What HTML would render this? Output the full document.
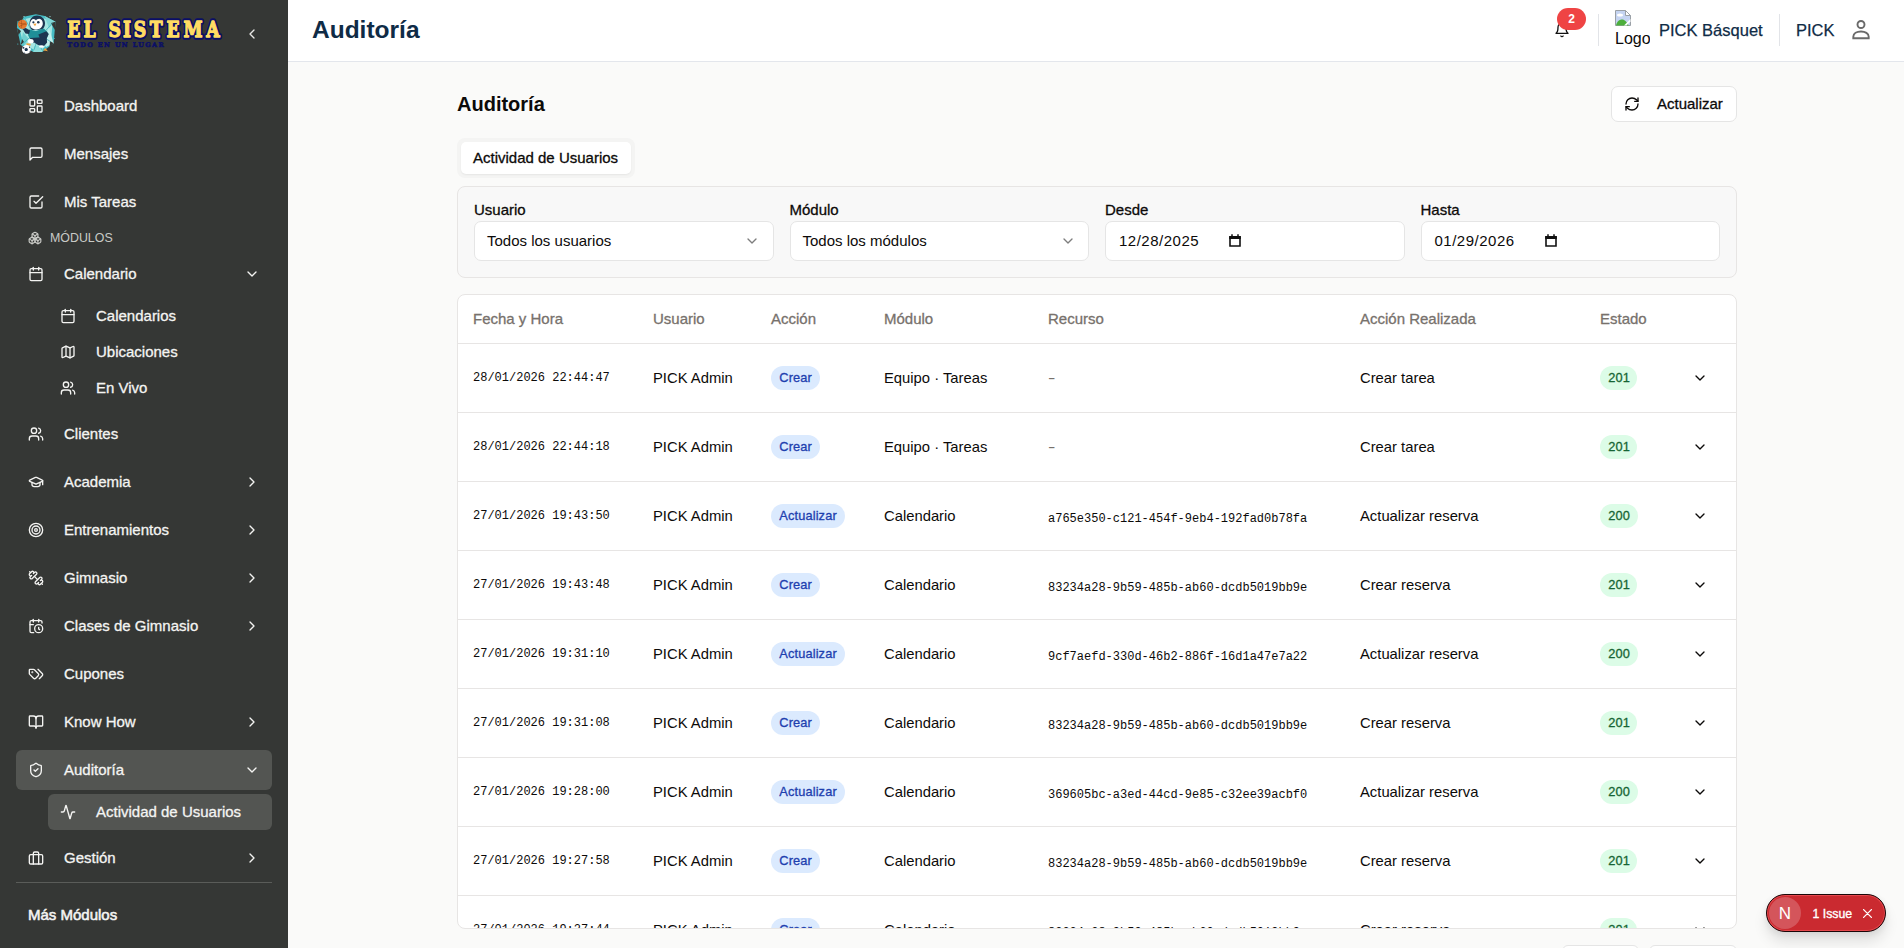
<!DOCTYPE html>
<html lang="es">
<head>
<meta charset="utf-8">
<title>Auditoría</title>
<style>
*{box-sizing:border-box;margin:0;padding:0}
html,body{width:1904px;height:948px;overflow:hidden}
body{font-family:"Liberation Sans",sans-serif;background:#fafaf9;color:#0c0a09;position:relative}
svg{display:block}
.ico{fill:none;stroke:currentColor;stroke-width:2;stroke-linecap:round;stroke-linejoin:round}
b{font-weight:normal}

/* ---------- sidebar ---------- */
#sb{position:absolute;left:0;top:0;width:288px;height:948px;background:#353735;color:#f4f4f2}
#sb .collapse{position:absolute;left:244px;top:26px;width:16px;height:16px;color:#e8e8e6}
#sb .collapse svg{width:16px;height:16px}
.ni{position:absolute;left:16px;width:256px;height:40px;border-radius:6px;font-size:15px;-webkit-text-stroke:.3px}
.ni .ico{position:absolute;left:12px;top:12px;width:16px;height:16px}
.ni span{position:absolute;left:48px;top:0;line-height:40px;white-space:nowrap}
.ni .chev{position:absolute;left:228px;top:12px;width:16px;height:16px}
.ni.sub{left:48px;width:224px;height:36px}
.ni.sub .ico{top:10px}
.ni.sub span{line-height:36px}
.ni.act{background:#535552}
#sb .sec{position:absolute;left:28px;top:230px;height:16px;font-size:12.4px;color:#c9cac6}
#sb .sec svg{position:absolute;left:0;top:1px;width:14px;height:14px}
#sb .sec span{position:absolute;left:22px;top:0;line-height:16px}
#sb hr{position:absolute;left:16px;top:882px;width:256px;height:1px;border:0;background:#5a5c59}
#sb .more{position:absolute;left:28px;top:905px;font-size:15px;-webkit-text-stroke:.55px;line-height:20px;white-space:nowrap}

/* logo */
#logo{position:absolute;left:16px;top:14px;width:40px;height:40px}
#brand{position:absolute;left:62px;top:12px;width:164px;height:40px;overflow:visible}

/* ---------- top bar ---------- */
#tb{position:absolute;left:288px;top:0;width:1616px;height:62px;background:#fff;border-bottom:1px solid #e3e6ec}
#tb h1{position:absolute;left:24px;top:14px;font-size:24.5px;line-height:32px;font-weight:bold;color:#0f2b46;white-space:nowrap}
#tb .bell{position:absolute;left:1266px;top:22px;width:16px;height:16px;color:#111}
#tb .badge{position:absolute;left:1269px;top:8px;width:29px;height:22px;border-radius:11px;background:#ef4444;color:#fff;font-size:12px;font-weight:bold;line-height:22px;text-align:center}
#tb .sep{position:absolute;top:14px;width:1px;height:32px;background:#e2e4e8}
#tb .org{position:absolute;left:1371px;top:16px;font-size:16.5px;line-height:28px;color:#0f2b46;white-space:nowrap;-webkit-text-stroke:.25px}
#tb .usr{position:absolute;left:1508px;top:16px;font-size:16.5px;line-height:28px;color:#0f2b46;white-space:nowrap;-webkit-text-stroke:.25px}
#tb .uic{position:absolute;left:1560px;top:18px;width:24px;height:24px;color:#6a6a6a}
#tb .uic svg{stroke-width:1.9;stroke-linejoin:miter}
#tb .img{position:absolute;left:1326px;top:9px;width:36px;height:42px;overflow:hidden;font-size:16px;line-height:20px;color:#0c0a09}
#tb .img svg{width:16px;height:16px;margin:1px 0 0 1px}
#tb .img span{display:block;margin:3px 0 0 1px;white-space:nowrap}

/* ---------- content ---------- */
#ct{position:absolute;left:457px;top:62px;width:1280px;height:886px}
#ct h2{position:absolute;left:0;top:28px;font-size:20px;line-height:28px;font-weight:bold;color:#0c0a09;white-space:nowrap}
.btn{position:absolute;border:1px solid #e5e5e5;border-radius:7px;background:#fff;font-size:15px;-webkit-text-stroke:.3px;white-space:nowrap}
#upd{left:1154px;top:24px;width:126px;height:36px}
#upd svg{position:absolute;left:12px;top:9px;width:16px;height:16px}
#upd span{position:absolute;left:45px;top:0;line-height:34px}
#tabs{position:absolute;left:0;top:76px;width:178px;height:40px;border-radius:8px;background:#f4f4f3}
#tabs div{position:absolute;left:4px;top:4px;width:170px;height:32px;border-radius:5px;background:#fff;box-shadow:0 1px 2px rgba(0,0,0,.06);font-size:15px;-webkit-text-stroke:.3px;line-height:32px;padding-left:12px;white-space:nowrap}
#flt{position:absolute;left:0;top:124px;width:1280px;height:92px;border:1px solid #e7e5e4;border-radius:8px;background:#f8f8f8}
.fld{position:absolute;top:14px;width:299.5px}
.fld label{display:block;font-size:15px;-webkit-text-stroke:.3px;line-height:18px;white-space:nowrap}
.fld .in{position:relative;margin-top:2px;height:40px;border:1px solid #e5e5e5;border-radius:7px;background:#fff;font-size:15px;line-height:38px;padding-left:12px;white-space:nowrap}
.fld .in .ico{position:absolute;right:12.500px;top:11px;width:16px;height:16px;color:#7d7d7d}
.fld .in .calic{position:absolute;left:123px;top:12px;width:12px;height:13px}
.fld .in.dt{letter-spacing:.5px;padding-left:13px}
#tbl{position:absolute;left:0;top:232px;width:1280px;height:635px;border:1px solid #e7e5e4;border-radius:8px;background:#fff;overflow:hidden}
.th{position:relative;height:49px;border-bottom:1px solid #e7e5e4;font-size:15px;-webkit-text-stroke:.3px;color:#77716c;line-height:48px}
.th span,.tr>span{position:absolute;top:0;white-space:nowrap}
.tr{position:relative;height:69px;border-bottom:1px solid #e7e5e4;font-size:14.8px;line-height:68px;color:#0c0a09}
.c1{left:15px}.c2{left:195px}.c3{left:313px}.c4{left:426px}.c5{left:590px}.c6{left:902px}.c7{left:1142px}
.ico.c8{position:absolute;left:1234px;top:26px;width:16px;height:16px}
.mono{font-family:"Liberation Mono",monospace;font-size:12px}
.dash{color:#77716c;display:inline-block;transform:scaleX(1.5);transform-origin:0 50%}
.mono.r{position:relative;top:1px}
.bd{display:inline-block;height:24px;border-radius:12px;padding:0 8.3px;letter-spacing:.13px;font-size:12.8px;-webkit-text-stroke:.3px;line-height:24px;vertical-align:middle;position:relative;top:-1px}
.bd.blue{background:#dbeafe;color:#1e40af}
.bd.green{background:#dcfce7;color:#166534}
.bd.n1{padding-right:6.800px}
.pg{position:absolute;top:883px;height:36px;border:1px solid #e5e5e5;border-radius:6px;background:#fff}

/* toast */
#toast{position:absolute;left:1766px;top:894px;width:120px;height:38px;border-radius:19px;background:#ca2a30;border:1px solid #1c0608;box-shadow:inset 0 0 0 1px #e5484d,0 10px 14px rgba(0,0,0,.10),0 2px 6px rgba(0,0,0,.08);color:#fff;font-size:12.3px;-webkit-text-stroke:.35px;line-height:36px}
#toast i{position:absolute;left:2px;top:2px;width:32px;height:32px;border-radius:16px;background:#d4555b;font-style:normal;text-align:center;line-height:33px;font-size:17px;-webkit-text-stroke:0}
#toast span{position:absolute;left:45.500px;top:1px;white-space:nowrap}
#toast svg{position:absolute;left:95.500px;top:13.500px;width:9px;height:9px;stroke:#fff;stroke-width:1.300;fill:none;stroke-linecap:round}

</style>
</head>
<body>
<div id="sb">
<svg id="logo" viewBox="0 0 40 40">
  <polygon points="7.800,2.700 19.800,.3 28.700,2 39.500,7.700 37.600,29.200 26.200,38.100 17.300,38.100 4.700,31.100 .9,14 1.500,7.100" fill="#46bcc4"/>
  <polygon points="9,5 19.800,2.500 28,4 36.500,9 35,28 25.500,35.800 18,35.800 7,29.500 3.500,14 4,9" fill="#a6e6e2"/>
  <polygon points="28.700,2 39.500,7.700 33,14 30,6" fill="#7fd6d6"/>
  <polygon points="33,14 37.600,29.200 30,33 31,20" fill="#c4f0ec"/>
  <polygon points="4.700,31.100 7,18 12,24 10,30" fill="#6fcfd0"/>
  <polygon points="17.300,38.100 26.200,38.100 27,31 18,32" fill="#8adcda"/>
  <polygon points=".9,14 5,17 2.500,21" fill="#353735"/>
  <polygon points="1.500,7.100 5,8.500 7.800,2.700 4,4" fill="#353735"/>
  <polygon points="37.600,29.200 34,27 33.500,33" fill="#353735"/>
  <polygon points="39.500,7.700 35,9 38.800,16" fill="#353735"/>
  <polygon points="4.700,31.100 8,28 6,25" fill="#353735"/>
  <path d="M9 5l8 14M28 4l-6 12M36.500 9l-8 9M35 28l-9-6M7 29.500l9-8M18 35.800l3-9M25.500 35.800l-2-9M3.500 14l10 4" stroke="#2fa9b4" stroke-width=".7" fill="none"/>
  <circle cx="8" cy="2.600" r=".6" fill="#a6e6e2"/><circle cx="34" cy="2.600" r=".6" fill="#a6e6e2"/><circle cx="38.300" cy="24.500" r=".6" fill="#46bcc4"/><circle cx="1.800" cy="30" r=".6" fill="#46bcc4"/>
  <path d="M13.500 9.500c0-5 3.200-8 7.500-8s8 3 8 8c0 3-1.500 5-3 6l-10 .5c-1.500-1.500-2.500-3.500-2.500-6.500z" fill="#1d3550"/>
  <path d="M14 10c0-3 1.800-5 3.600-5 1.300 0 2 .8 2.400 1.500.5-.8 1.500-1.700 3.200-1.700 2.300 0 3.600 2.200 3.600 4.800 0 3.200-2.600 5.900-6.500 5.900-3.800 0-6.300-2.300-6.300-5.500z" fill="#fff"/>
  <path d="M12.900 15.500l7 1.500 8-2.500 4.600 5-2 6-16 .5-2.500-5z" fill="#1f8f98"/>
  <path d="M6.600 14.800l3.200-.8 4.200 2.500-1 3.500-3.500-.5z" fill="#1d3550"/>
  <path d="M22.400 20.500l8-3.200 2.300 3-2 4-6.500 1z" fill="#1d3550"/>
  <path d="M14.200 24l16.400-1.100.5 5.500-3.500 4-5.500-1.500-4-2.500-3 .5z" fill="#1d3550"/>
  <ellipse cx="14.800" cy="27.300" rx="2.800" ry="2.200" fill="#fff"/>
  <ellipse cx="25.500" cy="32.500" rx="2.500" ry="1.300" fill="#fff"/>
  <circle cx="17.400" cy="8.300" r="1.100" fill="#1d3550"/>
  <circle cx="22.300" cy="8.300" r="1.300" fill="#1d3550"/>
  <path d="M17.300 9.800l3.300-.3-1.600 2.800z" fill="#f0a13a"/>
  <circle cx="6.400" cy="10.300" r="4.600" fill="#e47a30"/>
  <path d="M2.500 8.500c2.500 1.500 5.500 1.500 8 .5M5 6c1 3 1 6 0 8.500M3 13c2-2 5-3 7.500-2.500" stroke="#9a4412" stroke-width=".5" fill="none"/>
  <path d="M10.400 29.200l4.400.6-.4 2-3.800-.8z" fill="#f0a13a"/>
  <path d="M27.100 36.500l2.300-2.500 2.500 3.300-2.300-.5z" fill="#f0a13a"/>
  <circle cx="10.400" cy="35.400" r="4.400" fill="#fff"/>
  <path d="M10.200 33.800l1.800 1.300-.7 2h-2.200l-.7-2z" fill="#1d3550"/>
  <path d="M6.500 33.500l1.500-.8.500 1.200-1.500 1zM13 32l1.400 1.400-1.200.8zM7.500 38.500l1.600.2-.4 1zM13.300 37.800l.9-1.400.4 1.200z" fill="#1d3550"/>
</svg>
<svg id="brand" viewBox="0 0 164 40">
  <g font-family="'DejaVu Serif','Liberation Serif',serif" font-weight="bold" font-size="21.54" stroke-linejoin="round" transform="translate(0 24.55) scale(0.8 1)">
    <text x="6.59 26.91 45.00 58.04 76.33 89.54 109.73 130.65 151.82 180.36" y="0" fill="#0b0f66" stroke="#0b0f66" stroke-width="5.400">EL SISTEMA</text>
    <text x="6.59 26.91 45.00 58.04 76.33 89.54 109.73 130.65 151.82 180.36" y="0" fill="#ffdc62" stroke="#ffdc62" stroke-width="1.3">EL SISTEMA</text>
  </g>
  <text x="5.200" y="35" font-family="'DejaVu Serif','Liberation Serif',serif" font-weight="bold" font-size="6.400" textLength="96.500" lengthAdjust="spacing" fill="#0b0f66" stroke="#0b0f66" stroke-width=".5">TODO EN UN LUGAR</text>
</svg>

<div class="collapse"><svg class="ico" viewBox="0 0 24 24" ><path d="m15 18-6-6 6-6"/></svg></div>
<div class="ni" style="top:86px"><svg class="ico" viewBox="0 0 24 24" ><rect width="7" height="9" x="3" y="3" rx="1"/><rect width="7" height="5" x="14" y="3" rx="1"/><rect width="7" height="9" x="14" y="12" rx="1"/><rect width="7" height="5" x="3" y="16" rx="1"/></svg><span>Dashboard</span></div>
<div class="ni" style="top:134px"><svg class="ico" viewBox="0 0 24 24" ><path d="M21 15a2 2 0 0 1-2 2H7l-4 4V5a2 2 0 0 1 2-2h14a2 2 0 0 1 2 2z"/></svg><span>Mensajes</span></div>
<div class="ni" style="top:182px"><svg class="ico" viewBox="0 0 24 24" ><path d="m9 11 3 3L22 4"/><path d="M21 12v7a2 2 0 0 1-2 2H5a2 2 0 0 1-2-2V5a2 2 0 0 1 2-2h11"/></svg><span>Mis Tareas</span></div>
<div class="ni" style="top:254px"><svg class="ico" viewBox="0 0 24 24" ><path d="M8 2v4"/><path d="M16 2v4"/><rect width="18" height="18" x="3" y="4" rx="2"/><path d="M3 10h18"/></svg><span>Calendario</span><svg class="ico chev" viewBox="0 0 24 24" ><path d="m6 9 6 6 6-6"/></svg></div>
<div class="ni sub" style="top:298px"><svg class="ico" viewBox="0 0 24 24" ><path d="M8 2v4"/><path d="M16 2v4"/><rect width="18" height="18" x="3" y="4" rx="2"/><path d="M3 10h18"/></svg><span>Calendarios</span></div>
<div class="ni sub" style="top:334px"><svg class="ico" viewBox="0 0 24 24" ><path d="M14.106 5.553a2 2 0 0 0 1.788 0l3.659-1.830A1 1 0 0 1 21 4.619v12.764a1 1 0 0 1-.553.894l-4.553 2.277a2 2 0 0 1-1.788 0l-4.212-2.106a2 2 0 0 0-1.788 0l-3.659 1.830A1 1 0 0 1 3 19.381V6.618a1 1 0 0 1 .553-.894l4.553-2.277a2 2 0 0 1 1.788 0z"/><path d="M15 5.764v15"/><path d="M9 3.236v15"/></svg><span>Ubicaciones</span></div>
<div class="ni sub" style="top:370px"><svg class="ico" viewBox="0 0 24 24" ><path d="M16 21v-2a4 4 0 0 0-4-4H6a4 4 0 0 0-4 4v2"/><circle cx="9" cy="7" r="4"/><path d="M22 21v-2a4 4 0 0 0-3-3.870"/><path d="M16 3.130a4 4 0 0 1 0 7.750"/></svg><span>En Vivo</span></div>
<div class="ni" style="top:414px"><svg class="ico" viewBox="0 0 24 24" ><path d="M16 21v-2a4 4 0 0 0-4-4H6a4 4 0 0 0-4 4v2"/><circle cx="9" cy="7" r="4"/><path d="M22 21v-2a4 4 0 0 0-3-3.870"/><path d="M16 3.130a4 4 0 0 1 0 7.750"/></svg><span>Clientes</span></div>
<div class="ni" style="top:462px"><svg class="ico" viewBox="0 0 24 24" ><path d="M21.420 10.922a1 1 0 0 0-.019-1.838L12.830 5.180a2 2 0 0 0-1.660 0L2.600 9.080a1 1 0 0 0 0 1.832l8.570 3.908a2 2 0 0 0 1.660 0z"/><path d="M22 10v6"/><path d="M6 12.500V16a6 3 0 0 0 12 0v-3.500"/></svg><span>Academia</span><svg class="ico chev" viewBox="0 0 24 24" ><path d="m9 18 6-6-6-6"/></svg></div>
<div class="ni" style="top:510px"><svg class="ico" viewBox="0 0 24 24" ><circle cx="12" cy="12" r="10"/><circle cx="12" cy="12" r="6"/><circle cx="12" cy="12" r="2"/></svg><span>Entrenamientos</span><svg class="ico chev" viewBox="0 0 24 24" ><path d="m9 18 6-6-6-6"/></svg></div>
<div class="ni" style="top:558px"><svg class="ico" viewBox="0 0 24 24" ><path d="M14.400 14.400 9.600 9.600"/><path d="M18.657 21.485a2 2 0 1 1-2.829-2.828l-1.767 1.768a2 2 0 1 1-2.829-2.829l6.364-6.364a2 2 0 1 1 2.829 2.829l-1.768 1.767a2 2 0 1 1 2.828 2.829z"/><path d="m21.500 21.500-1.400-1.400"/><path d="M3.900 3.900 2.500 2.500"/><path d="M6.404 12.768a2 2 0 1 1-2.829-2.829l1.768-1.767a2 2 0 1 1-2.828-2.829l2.828-2.828a2 2 0 1 1 2.829 2.828l1.767-1.768a2 2 0 1 1 2.829 2.829z"/></svg><span>Gimnasio</span><svg class="ico chev" viewBox="0 0 24 24" ><path d="m9 18 6-6-6-6"/></svg></div>
<div class="ni" style="top:606px"><svg class="ico" viewBox="0 0 24 24" ><path d="M21 7.500V6a2 2 0 0 0-2-2H5a2 2 0 0 0-2 2v14a2 2 0 0 0 2 2h3.500"/><path d="M16 2v4"/><path d="M8 2v4"/><path d="M3 10h5"/><path d="M17.500 17.500 16 16.300V14"/><circle cx="16" cy="16" r="6"/></svg><span>Clases de Gimnasio</span><svg class="ico chev" viewBox="0 0 24 24" ><path d="m9 18 6-6-6-6"/></svg></div>
<div class="ni" style="top:654px"><svg class="ico" viewBox="0 0 24 24" ><path d="m15 5 6.300 6.300a2.400 2.400 0 0 1 0 3.400L17 19"/><path d="M9.586 5.586A2 2 0 0 0 8.172 5H3a1 1 0 0 0-1 1v5.172a2 2 0 0 0 .586 1.414L8.290 18.290a2.426 2.426 0 0 0 3.420 0l3.580-3.580a2.426 2.426 0 0 0 0-3.420z"/><circle cx="6.500" cy="9.500" r=".5" fill="currentColor"/></svg><span>Cupones</span></div>
<div class="ni" style="top:702px"><svg class="ico" viewBox="0 0 24 24" ><path d="M12 7v14"/><path d="M3 18a1 1 0 0 1-1-1V4a1 1 0 0 1 1-1h5a4 4 0 0 1 4 4 4 4 0 0 1 4-4h5a1 1 0 0 1 1 1v13a1 1 0 0 1-1 1h-6a3 3 0 0 0-3 3 3 3 0 0 0-3-3z"/></svg><span>Know How</span><svg class="ico chev" viewBox="0 0 24 24" ><path d="m9 18 6-6-6-6"/></svg></div>
<div class="ni act" style="top:750px"><svg class="ico" viewBox="0 0 24 24" ><path d="M20 13c0 5-3.500 7.500-7.660 8.950a1 1 0 0 1-.670-.010C7.500 20.500 4 18 4 13V6a1 1 0 0 1 1-1c2 0 4.500-1.200 6.240-2.720a1.170 1.170 0 0 1 1.520 0C14.510 3.810 17 5 19 5a1 1 0 0 1 1 1z"/><path d="m9 12 2 2 4-4"/></svg><span>Auditoría</span><svg class="ico chev" viewBox="0 0 24 24" ><path d="m6 9 6 6 6-6"/></svg></div>
<div class="ni sub act" style="top:794px"><svg class="ico" viewBox="0 0 24 24" ><path d="M22 12h-2.480a2 2 0 0 0-1.930 1.460l-2.350 8.360a.25.25 0 0 1-.480 0L9.240 2.180a.25.25 0 0 0-.480 0l-2.350 8.360A2 2 0 0 1 4.490 12H2"/></svg><span>Actividad de Usuarios</span></div>
<div class="ni" style="top:838px"><svg class="ico" viewBox="0 0 24 24" ><rect width="20" height="14" x="2" y="7" rx="2" ry="2"/><path d="M16 21V5a2 2 0 0 0-2-2h-4a2 2 0 0 0-2 2v16"/></svg><span>Gestión</span><svg class="ico chev" viewBox="0 0 24 24" ><path d="m9 18 6-6-6-6"/></svg></div>
<div class="sec"><svg class="ico" viewBox="0 0 24 24" ><path d="M2.970 12.920A2 2 0 0 0 2 14.630v3.240a2 2 0 0 0 .970 1.710l3 1.800a2 2 0 0 0 2.060 0L12 19v-5.500l-5-3-4.030 2.420Z"/><path d="m7 16.500-4.740-2.850"/><path d="m7 16.500 5-3"/><path d="M7 16.500v5.170"/><path d="M12 13.500V19l3.970 2.380a2 2 0 0 0 2.060 0l3-1.800a2 2 0 0 0 .970-1.710v-3.240a2 2 0 0 0-.970-1.710L17 10.500l-5 3Z"/><path d="m17 16.500-5-3"/><path d="m17 16.500 4.740-2.850"/><path d="M17 16.500v5.170"/><path d="M7.970 4.420A2 2 0 0 0 7 6.130v4.370l5 3 5-3V6.130a2 2 0 0 0-.970-1.710l-3-1.800a2 2 0 0 0-2.060 0l-3 1.800Z"/><path d="M12 8 7.260 5.150"/><path d="m12 8 4.740-2.850"/><path d="M12 13.500V8"/></svg><span>MÓDULOS</span></div>
<hr><div class="more">Más Módulos</div>
</div>
<div id="tb">
<h1>Auditoría</h1>
<div class="bell"><svg class="ico" viewBox="0 0 24 24" ><path d="M6 8a6 6 0 0 1 12 0c0 7 3 9 3 9H3s3-2 3-9"/><path d="M10.300 21a1.940 1.940 0 0 0 3.400 0"/></svg></div>
<div class="badge">2</div>
<div class="sep" style="left:1310px"></div>
<div class="img"><svg viewBox="0 0 16 16"><path d="M.5.5h10l5 5v10H.5z" fill="#c5d4f2" stroke="#9aa0a6"/><path d="M10.500.5v5h5z" fill="#fff" stroke="#9aa0a6" stroke-linejoin="round"/><path d="M1 15.500c1-5 5-7 8-5.500 2 1 4 3.500 4.500 5.500z" fill="#4caf3c"/><path d="M9 15.500l6.500-6.500v2.500l-4 4z" fill="#fff"/><ellipse cx="5" cy="5" rx="3" ry="1.600" fill="#fff"/></svg><span>Logo</span></div>
<div class="org">PICK Básquet</div>
<div class="sep" style="left:1491px"></div>
<div class="usr">PICK</div>
<div class="uic"><svg class="ico" viewBox="0 0 24 24" ><circle cx="13" cy="6.500" r="3.500"/><path d="M5.300 20.200h15.400v-1.400c0-3.300-3.500-5.300-7.700-5.300s-7.700 2-7.700 5.300z"/></svg></div>

</div>
<div id="ct">
<h2>Auditoría</h2>
<div class="btn" id="upd"><svg class="ico" viewBox="0 0 24 24" ><path d="M3 12a9 9 0 0 1 9-9 9.750 9.750 0 0 1 6.740 2.740L21 8"/><path d="M21 3v5h-5"/><path d="M21 12a9 9 0 0 1-9 9 9.750 9.750 0 0 1-6.740-2.740L3 16"/><path d="M8 16H3v5"/></svg><span>Actualizar</span></div>
<div id="tabs"><div>Actividad de Usuarios</div></div>
<div id="flt">
  <div class="fld" style="left:16px"><label>Usuario</label><div class="in">Todos los usuarios<svg class="ico" viewBox="0 0 24 24" ><path d="m6 9 6 6 6-6"/></svg></div></div>
  <div class="fld" style="left:331.5px"><label>Módulo</label><div class="in">Todos los módulos<svg class="ico" viewBox="0 0 24 24" ><path d="m6 9 6 6 6-6"/></svg></div></div>
  <div class="fld" style="left:647px"><label>Desde</label><div class="in dt">12/28/2025<svg class="calic" viewBox="0 0 12 13" preserveAspectRatio="none"><path d="M1 3h10v9H1z" fill="none" stroke="#111" stroke-width="1.600"/><path d="M.2 2h11.600v3H.2z" fill="#111"/><path d="M3 .3v3M9 .3v3" stroke="#111" stroke-width="1.500"/></svg></div></div>
  <div class="fld" style="left:962.5px"><label>Hasta</label><div class="in dt">01/29/2026<svg class="calic" viewBox="0 0 12 13" preserveAspectRatio="none"><path d="M1 3h10v9H1z" fill="none" stroke="#111" stroke-width="1.600"/><path d="M.2 2h11.600v3H.2z" fill="#111"/><path d="M3 .3v3M9 .3v3" stroke="#111" stroke-width="1.500"/></svg></div></div>
</div>
<div id="tbl">
  <div class="th"><span class="c1">Fecha y Hora</span><span class="c2">Usuario</span><span class="c3">Acción</span><span class="c4">Módulo</span><span class="c5">Recurso</span><span class="c6">Acción Realizada</span><span class="c7">Estado</span></div>
<div class="tr"><span class="c1 mono">28/01/2026 22:44:47</span><span class="c2">PICK Admin</span><span class="c3"><b class="bd blue">Crear</b></span><span class="c4">Equipo · Tareas</span><span class="c5"><span class="dash">-</span></span><span class="c6">Crear tarea</span><span class="c7"><b class="bd green n1">201</b></span><svg class="ico c8" viewBox="0 0 24 24" ><path d="m6 9 6 6 6-6"/></svg></div>
<div class="tr"><span class="c1 mono">28/01/2026 22:44:18</span><span class="c2">PICK Admin</span><span class="c3"><b class="bd blue">Crear</b></span><span class="c4">Equipo · Tareas</span><span class="c5"><span class="dash">-</span></span><span class="c6">Crear tarea</span><span class="c7"><b class="bd green n1">201</b></span><svg class="ico c8" viewBox="0 0 24 24" ><path d="m6 9 6 6 6-6"/></svg></div>
<div class="tr"><span class="c1 mono">27/01/2026 19:43:50</span><span class="c2">PICK Admin</span><span class="c3"><b class="bd blue">Actualizar</b></span><span class="c4">Calendario</span><span class="c5"><span class="mono r">a765e350-c121-454f-9eb4-192fad0b78fa</span></span><span class="c6">Actualizar reserva</span><span class="c7"><b class="bd green">200</b></span><svg class="ico c8" viewBox="0 0 24 24" ><path d="m6 9 6 6 6-6"/></svg></div>
<div class="tr"><span class="c1 mono">27/01/2026 19:43:48</span><span class="c2">PICK Admin</span><span class="c3"><b class="bd blue">Crear</b></span><span class="c4">Calendario</span><span class="c5"><span class="mono r">83234a28-9b59-485b-ab60-dcdb5019bb9e</span></span><span class="c6">Crear reserva</span><span class="c7"><b class="bd green n1">201</b></span><svg class="ico c8" viewBox="0 0 24 24" ><path d="m6 9 6 6 6-6"/></svg></div>
<div class="tr"><span class="c1 mono">27/01/2026 19:31:10</span><span class="c2">PICK Admin</span><span class="c3"><b class="bd blue">Actualizar</b></span><span class="c4">Calendario</span><span class="c5"><span class="mono r">9cf7aefd-330d-46b2-886f-16d1a47e7a22</span></span><span class="c6">Actualizar reserva</span><span class="c7"><b class="bd green">200</b></span><svg class="ico c8" viewBox="0 0 24 24" ><path d="m6 9 6 6 6-6"/></svg></div>
<div class="tr"><span class="c1 mono">27/01/2026 19:31:08</span><span class="c2">PICK Admin</span><span class="c3"><b class="bd blue">Crear</b></span><span class="c4">Calendario</span><span class="c5"><span class="mono r">83234a28-9b59-485b-ab60-dcdb5019bb9e</span></span><span class="c6">Crear reserva</span><span class="c7"><b class="bd green n1">201</b></span><svg class="ico c8" viewBox="0 0 24 24" ><path d="m6 9 6 6 6-6"/></svg></div>
<div class="tr"><span class="c1 mono">27/01/2026 19:28:00</span><span class="c2">PICK Admin</span><span class="c3"><b class="bd blue">Actualizar</b></span><span class="c4">Calendario</span><span class="c5"><span class="mono r">369605bc-a3ed-44cd-9e85-c32ee39acbf0</span></span><span class="c6">Actualizar reserva</span><span class="c7"><b class="bd green">200</b></span><svg class="ico c8" viewBox="0 0 24 24" ><path d="m6 9 6 6 6-6"/></svg></div>
<div class="tr"><span class="c1 mono">27/01/2026 19:27:58</span><span class="c2">PICK Admin</span><span class="c3"><b class="bd blue">Crear</b></span><span class="c4">Calendario</span><span class="c5"><span class="mono r">83234a28-9b59-485b-ab60-dcdb5019bb9e</span></span><span class="c6">Crear reserva</span><span class="c7"><b class="bd green n1">201</b></span><svg class="ico c8" viewBox="0 0 24 24" ><path d="m6 9 6 6 6-6"/></svg></div>
<div class="tr"><span class="c1 mono">27/01/2026 19:27:44</span><span class="c2">PICK Admin</span><span class="c3"><b class="bd blue">Crear</b></span><span class="c4">Calendario</span><span class="c5"><span class="mono r">83234a28-9b59-485b-ab60-dcdb5019bb9e</span></span><span class="c6">Crear reserva</span><span class="c7"><b class="bd green n1">201</b></span><svg class="ico c8" viewBox="0 0 24 24" ><path d="m6 9 6 6 6-6"/></svg></div>
</div>
<div class="pg" style="left:1105px;width:77px"></div>
<div class="pg" style="left:1192px;width:88px"></div>

</div>
<div id="toast"><i>N</i><span>1 Issue</span><svg viewBox="0 0 9 9"><path d="M.6.6l7.800 7.800M8.400.6L.6 8.400"/></svg></div>

</body>
</html>
